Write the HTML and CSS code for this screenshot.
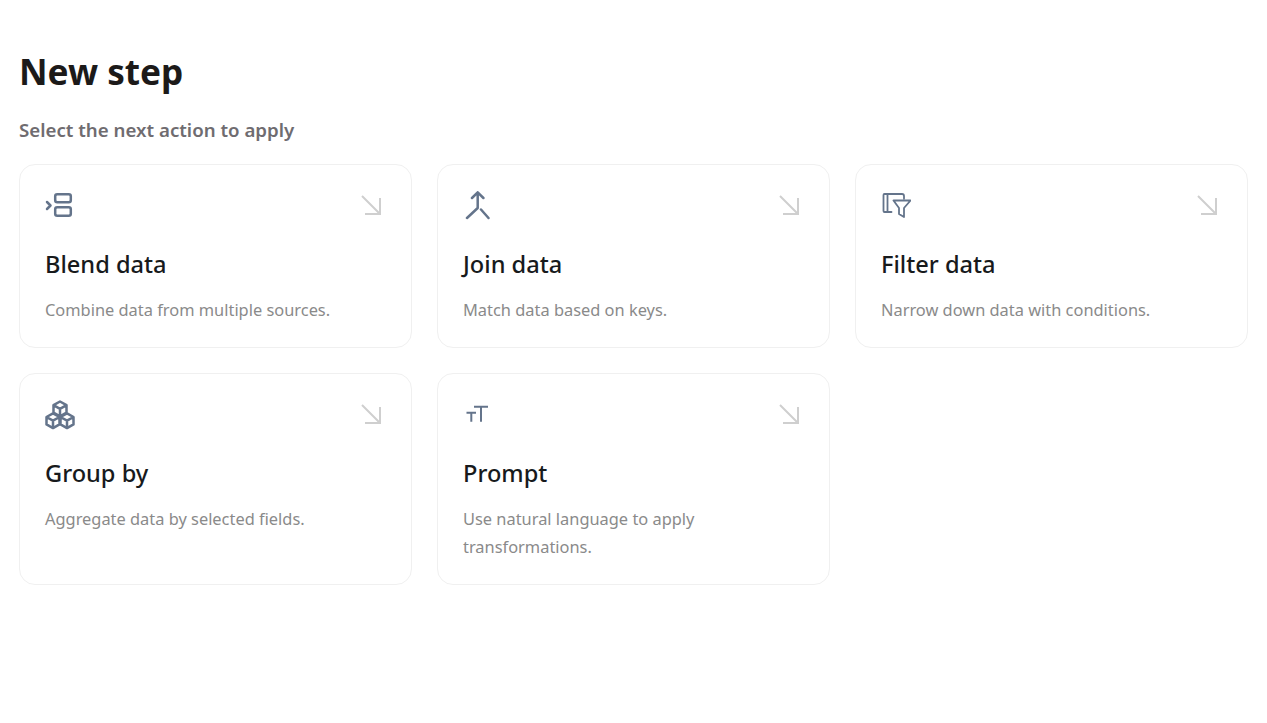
FILE: index.html
```html
<!DOCTYPE html>
<html lang="en">
<head>
    <meta charset="UTF-8">
    <meta name="viewport" content="width=device-width, initial-scale=1.0">
    <title>New step</title>
    <link rel="stylesheet" href="styles.css">
</head>
<body>
    <div class="container">
        <h1>New step</h1>
        <p class="subtitle">Select the next action to apply</p>
        <div class="card-grid">
            <div class="card">
                <div class="card-top">
                    <svg class="icon" viewBox="0 0 30 30"><path d="M2 11l3.500 3.500L2 18"/><rect x="10.200" y="3.200" width="15.600" height="8" rx="2"/><rect x="10.200" y="16.200" width="15.600" height="8.600" rx="2"/></svg>
                    <svg class="arrow" viewBox="0 0 24 24"><path d="M3 3l18 18M21 5v16H6"/></svg>
                </div>
                <h2>Blend data</h2>
                <p class="desc">Combine data from multiple sources.</p>
            </div>
            <div class="card">
                <div class="card-top">
                    <svg class="icon" viewBox="0 0 30 30"><path d="M9 7l5.700-5.700L20.400 7M14.700 1.500V17L4 27M18 18.500l7.500 8.500"/></svg>
                    <svg class="arrow" viewBox="0 0 24 24"><path d="M3 3l18 18M21 5v16H6"/></svg>
                </div>
                <h2>Join data</h2>
                <p class="desc">Match data based on keys.</p>
            </div>
            <div class="card">
                <div class="card-top">
                    <svg class="icon icon-thin" viewBox="0 0 30 30"><path d="M10.500 21H3.500a1 1 0 0 1-1-1V4a1 1 0 0 1 1-1H21a2 2 0 0 1 2 2v2.500M6.500 3v18M12.500 9.500h17l-6.500 7.500v9l-5-3v-6z"/></svg>
                    <svg class="arrow" viewBox="0 0 24 24"><path d="M3 3l18 18M21 5v16H6"/></svg>
                </div>
                <h2>Filter data</h2>
                <p class="desc">Narrow down data with conditions.</p>
            </div>
            <div class="card">
                <div class="card-top">
                    <svg class="icon" viewBox="0 1 30 30"><path d="M15 2.500l6.500 3.700v7.400L15 17.300l-6.500-3.700V6.200zM8.500 6.200L15 9.900l6.500-3.700M15 9.900v7.400M8 14.300l6.500 3.700v7.400L8 29.100l-6.500-3.700V18zM1.500 18L8 21.700l6.500-3.700M8 21.700v7.400M22 14.300l6.500 3.700v7.400L22 29.100l-6.500-3.700V18zM15.500 18l6.500 3.700 6.500-3.700M22 21.700v7.400"/></svg>
                    <svg class="arrow" viewBox="0 0 24 24"><path d="M3 3l18 18M21 5v16H6"/></svg>
                </div>
                <h2>Group by</h2>
                <p class="desc">Aggregate data by selected fields.</p>
            </div>
            <div class="card">
                <div class="card-top">
                    <svg class="icon icon-text" viewBox="0 0 30 30"><path d="M11 6.700h14M18 6.700v15M3.500 12.700h9.500M8.300 12.700v9"/></svg>
                    <svg class="arrow" viewBox="0 0 24 24"><path d="M3 3l18 18M21 5v16H6"/></svg>
                </div>
                <h2>Prompt</h2>
                <p class="desc">Use natural language to apply transformations.</p>
            </div>
        </div>
    </div>
</body>
</html>
```

FILE: styles.css
```css
body {
    font-family: "Noto Sans", "Open Sans", sans-serif;
    margin: 0;
    padding: 0;
    background-color: #fff;
}
.container {
    padding: 46px 19px 0;
}
h1 {
    margin: 0;
    font-size: 35.2px;
    line-height: 50px;
    font-weight: 700;
    color: #1c1a19;
}
.subtitle {
    margin: 20px 0 21px;
    font-size: 18.7px;
    line-height: 27px;
    font-weight: 600;
    color: #6f6c70;
}
.card-grid {
    display: grid;
    grid-template-columns: repeat(3, 393px);
    gap: 25px;
}
.card {
    box-sizing: border-box;
    padding: 26px 25px 23px;
    border: 1px solid #f0f0f0;
    border-radius: 16px;
}
.card-top {
    display: flex;
    justify-content: space-between;
    align-items: center;
    height: 30px;
}
.icon {
    width: 30px;
    height: 30px;
    fill: none;
    stroke: #64748b;
    stroke-width: 2.5;
    stroke-linecap: round;
    stroke-linejoin: round;
}
.icon-thin {
    stroke-width: 1.800;
}
.icon-text {
    stroke-width: 2;
    stroke-linecap: butt;
}
.arrow {
    width: 24px;
    height: 24px;
    margin: 0 3px 2px 0;
    fill: none;
    stroke: #cfcfcf;
    stroke-width: 2;
}
h2 {
    margin: 26px 0 0;
    font-size: 23.6px;
    line-height: 34px;
    font-weight: 500;
    color: #171a1c;
}
.desc {
    margin: 15px 0 0;
    font-size: 16.4px;
    line-height: 28px;
    color: #8a8a8a;
}
```
